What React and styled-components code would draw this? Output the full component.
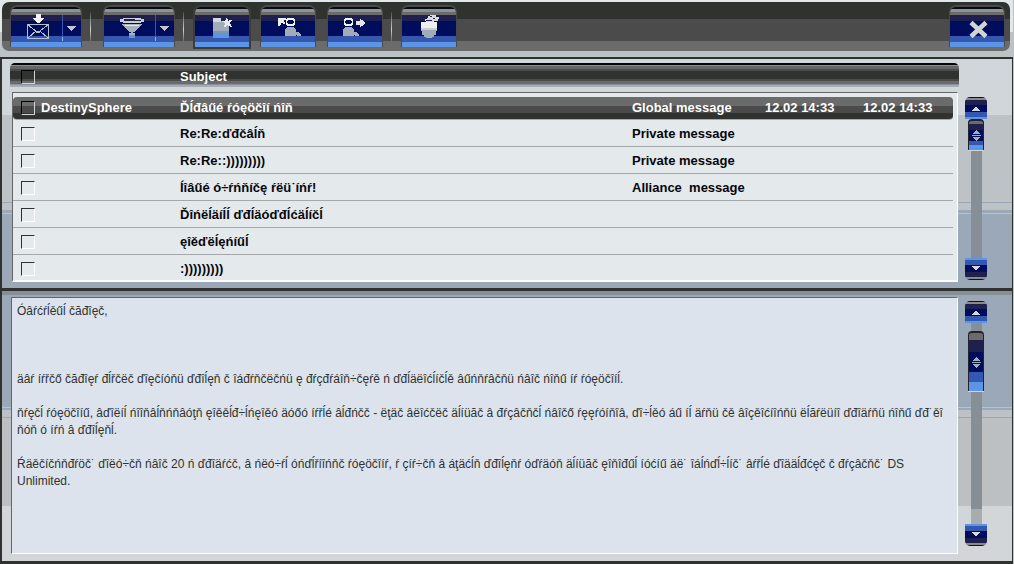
import React, { useState } from "react";
import styled, { createGlobalStyle } from "styled-components";

const GlobalStyle = createGlobalStyle`
  * {
    box-sizing: border-box;
  }

  body {
    margin: 0;
    background-color: #bcc2c6;
    font-family: "Liberation Sans", Arial, sans-serif;
  }
`;

const Page = styled.div`
  display: flex;
  flex-direction: column;
  min-height: 100vh;
  padding-right: 1px;
`;

const ToolbarArea = styled.header`
  padding: 2px 3px 6px 2px;
  background: linear-gradient(#e2e8ea 32px, #bcc2c6 32px);
`;

const Toolbar = styled.div`
  display: flex;
  align-items: flex-start;
  height: 49px;
  padding: 5px 4px 4px 9px;
  border-radius: 7px;
  background: linear-gradient(#30322f 17px, #4b4b4b 17px 39px, #6b6b6b 39px);
`;

const Divider = styled.span`
  width: 1px;
  height: 29px;
  margin: 5px ${(props) => props.$after}px 0 9px;
  background: linear-gradient(#4b4b4b, #d0d0d0 60%, #6b6b6b);
`;

const BUTTON_FACE = `linear-gradient(
  #0a0b12 2px,
  #8c929c 2px 5px,
  #6b6b6b 5px 8px,
  #20204e 8px 14px,
  #000c5c 14px 29px,
  #3458b0 29px 35px,
  #5c94e8 35px
)`;

const ToolButton = styled.button`
  flex: none;
  width: ${(props) => props.$width || 54}px;
  height: 40px;
  margin-right: ${(props) => props.$after || 0}px;
  margin-left: ${(props) => (props.$last ? "auto" : "0")};
  padding: 0;
  border: 0;
  border-radius: 6px 6px 0 0;
  background: ${BUTTON_FACE};
  box-shadow: ${(props) =>
    props.$active ? "0 0 0 2px #3c3d3b" : "0 -1px 0 1px #484948"};
  cursor: pointer;

  svg {
    display: block;
  }
`;

const MessagesPanel = styled.section`
  display: flex;
  padding: 4px 25px 6px 8px;
  border: solid #30322f;
  border-width: 2px 1px 3px 2px;
  background: linear-gradient(
    #d0d6d9 56px,
    #bcc2c6 56px 143px,
    #9aa8b8 143px 144px,
    #bcc2c6 144px 151px,
    #9aa8b8 151px 154px,
    #bcc2c6 154px 155px,
    #9aa8b8 155px
  );
`;

const MessageTable = styled.table`
  display: block;
  flex: 1;
  min-width: 0;
  color: #05070c;
  font-size: 13px;
  font-weight: bold;
  line-height: 16px;
`;

const TableHead = styled.thead`
  display: block;
  height: 24px;
  padding-left: 3px;
  border-radius: 5px 5px 0 0;
  color: #fff;
  background: linear-gradient(
    #05060a 2px,
    #8a9098 2px 3px,
    #666 3px 6px,
    #4b4b4b 6px 8px,
    #30322f 8px 16px,
    #4b4b4b 16px 18px,
    #6b6b6b 18px 21px,
    #8890a0 21px 22px,
    #a8acac 22px
  );
`;

const TableBody = styled.tbody`
  display: block;
  margin: 5px 1px 0 2px;
  padding: 4px 4px 0 0;
  border: 1px solid #fff;
  border-top-color: #666;
  border-left-color: #666;
  border-bottom-width: 2px;
  background-color: #e4e9eb;
`;

const Row = styled.tr`
  display: grid;
  grid-template-columns: 28px 139px 1fr 133px 98px 90px;
  align-items: center;
  height: 27px;
  padding-top: 2px;
  border-bottom: 1px solid #a4a8aa;

  &:last-child {
    height: 25px;
    border-bottom: 0;
  }
`;

const HeaderRow = styled(Row)`
  &:last-child {
    height: 26px;
  }
`;

const SelectedRow = styled(Row)`
  height: 23px;
  padding-top: 0;
  border-radius: 4px;
  color: #fff;
  background: linear-gradient(#6b6b6b 9px, #4b4b4b 9px 16px, #30322f 16px);
`;

const Cell = styled.td`
  padding: 0;
  text-align: left;
  white-space: pre;
`;

const CheckCell = styled(Cell)`
  display: flex;
  padding-left: 8px;
`;

const Check = styled.input`
  appearance: none;
  width: 14px;
  height: 14px;
  margin: 0;
  border: 1px solid ${(props) => (props.$dark ? "#d0d4d6" : "#fff")};
  border-top-color: ${(props) => (props.$dark ? "#000" : "#30322f")};
  border-left-color: ${(props) => (props.$dark ? "#000" : "#30322f")};

  &:checked {
    background: #3458b0;
  }
`;

const ReaderPanel = styled.section`
  display: flex;
  flex: 1;
  padding: 6px 25px 7px 9px;
  border: solid #30322f;
  border-width: 0 1px 3px 2px;
  background: linear-gradient(
    #868e96 4px,
    #9aa8b8 4px 116px,
    #bcc2c6 116px 117px,
    #9aa8b8 117px 119px,
    #bcc2c6 119px 126px,
    #9aa8b8 126px 127px,
    #bcc0c3 127px 215px,
    #d2d6d8 215px
  );
`;

const Letter = styled.article`
  flex: 1;
  min-width: 0;
  padding: 5px;
  border: 1px solid #fff;
  border-top-color: #666;
  border-left-color: #666;
  color: #30322f;
  background-color: #dce3ec;
  font-size: 12px;
  line-height: 17px;
`;

const Paragraph = styled.p`
  margin: 0 0 ${(props) => (props.$greeting ? 51 : 17)}px;
`;

const ScrollColumn = styled.div`
  display: flex;
  flex: none;
  flex-direction: column;
  align-items: center;
  width: 22px;
  margin: ${(props) => props.$top}px 0 ${(props) => props.$bottom}px
    ${(props) => props.$left}px;
`;

const ScrollButton = styled.button`
  flex: none;
  width: 22px;
  height: 22px;
  padding: 0;
  border: 0;
  border-radius: 5px 5px 0 0;
  background: linear-gradient(
    #101216 1px,
    #8a8a8a 1px 3px,
    #20204e 3px 8px,
    #000c5c 8px 15px,
    #3458b0 15px 20px,
    #5c94e8 20px
  );
  transform: ${(props) => (props.$down ? "rotate(180deg)" : "none")};

  svg {
    display: block;
  }
`;

const Track = styled.div`
  display: flex;
  flex: 1;
  flex-direction: column;
  align-items: center;
  width: 11px;
  padding-top: ${(props) => props.$start}px;
  background: linear-gradient(
    #868e96 calc(100% - ${(props) => props.$end}px),
    #a8acac calc(100% - ${(props) => props.$end}px)
  );
`;

const Thumb = styled.div`
  display: flex;
  flex: none;
  align-items: center;
  justify-content: center;
  width: 16px;
  height: ${(props) => props.$height}px;
  border: solid #22242a;
  border-width: 2px 1px 0;
  border-radius: 4px 4px 0 0;
  background: linear-gradient(
    #6b6b6b 12%,
    #20204e 12% 32%,
    #000c5c 32% 68%,
    #3458b0 68% 84%,
    #5c94e8 84%
  );
  box-shadow: 0 1px 0 #d0d6d9;
`;

const Caret = () => (
  <g>
    <path d="M51 8h1v21h-1z" fill="#3458b0" />
    <path d="M51 30h1v4h-1z" fill="#8ab4f0" />
    <path d="M56 19h9v1h-1v1h-1v1h-1v1h-1v1h-1v-1h-1v-1h-1v-1h-1v-1h-1z" fill="#c4c8cc" />
  </g>
);

const MailIcon = () => (
  <svg width="70" height="40" shapeRendering="crispEdges">
    <path d="M25 7h5v4h3v1h-1v1h-1v1h-1v1h-1v1h-3v-1h-1v-1h-1v-1h-1v-1h-1v-1h3z" fill="#f2f4f4" />
    <g fill="none" stroke="#b4bec8">
      <path d="M16.500 17.500h21v14h-21z" />
      <path d="M17 18l8 6h4l8-6M17 31l8-7M37 31l-8-7M25 25h4" />
    </g>
    <Caret />
  </svg>
);

const FilterIcon = () => (
  <svg width="70" height="40" shapeRendering="crispEdges">
    <path
      d="M19 11h18v1h3v3h-3v1H19v-1h-3v-3h3zM20 13v1h17v-1h-6v-1H20z"
      fill="#c8d0d4"
      fillRule="evenodd"
    />
    <path d="M18 17h20v1h-1v1h-1v1h-1v1h-1v1h-1v1h-1v1h-1v1h-2v1h2v2h-6v-2h2v-1h-2v-1h-1v-1h-1v-1h-1v-1h-1v-1h-1v-1h-1v-1h-1z" fill="#a8b2bc" />
    <path d="M21 18h14v1H21z" fill="#e4e8ea" />
    <path d="M25 28h6v3h-6z" fill="#5c94e8" />
    <Caret />
  </svg>
);

const NewIcon = () => (
  <svg width="54" height="40" shapeRendering="crispEdges">
    <path d="M18 11h8v3h8v10H18z" fill="#a0acba" />
    <path d="M18 11h8v4h-8z" fill="#d4d8da" />
    <path d="M18 24h16v2H18z" fill="#8494a8" />
    <path d="M18 26h16v5H18z" fill="#5c94e8" />
    <path d="M31 11h1v1h1v2h1v-1h3v1h-1v1h-1v2h1v2h1v1h-2v-1h-2v-1h-1v1h-1v1h-2v-2h1v-2h-1v-1h-2v-1h3v-1h1z" fill="#e6eaea" />
  </svg>
);

const Person = () => (
  <g>
    <path d="M2 0h7v1h1v6H9v1H2V7H1V1h1z" fill="#f2f4f4" />
    <path d="M3 2h5v1h1v2H8v1H3V5H2V3h1z" fill="#000c5c" />
    <path d="M2 9h7v1h1v1h1v3h3v1h1v1h1v2h-4v-1h-1v1H0v-7h1v-1h1z" fill="#a0acba" />
  </g>
);

const ReplyIcon = () => (
  <svg width="54" height="40" shapeRendering="crispEdges">
    <path d="M17 11h8v2h-2v2h1v2h-2v-1h-2v2h-1v1h-2z" fill="#eceeee" />
    <g transform="translate(24 11)">
      <Person />
    </g>
  </svg>
);

const ForwardIcon = () => (
  <svg width="54" height="40" shapeRendering="crispEdges">
    <g transform="translate(15 11)">
      <Person />
    </g>
    <path d="M28 14h4v-2h1v1h2v1h1v1h1v2h-1v1h-1v1h-2v1h-1v-2h-4z" fill="#e2e6e8" />
  </svg>
);

const TrashIcon = () => (
  <svg width="54" height="40" shapeRendering="crispEdges">
    <path d="M28 8h6v2h3v2h-1v2h-4v1h-8v-1h-1v-2h2v-1h1V9h2z" fill="#d8dcdc" />
    <path d="M28 9h2v1h-2zM31 11h2v1h-2zM24 13h6v1h-6z" fill="#20204e" />
    <path d="M19 15h16v6H19z" fill="#eef0f0" />
    <path d="M19 21h16v3h-1v4h-2v2h-2v1h-6v-1h-2v-2h-2v-4h-1z" fill="#a0acba" />
    <path d="M19 21h16v2H19z" fill="#c8ced2" />
  </svg>
);

const CloseIcon = () => (
  <svg width="54" height="40">
    <path d="M21 15.500l15 14M36 15.500l-15 14" stroke="#d0d4d6" strokeWidth="4.500" fill="none" />
  </svg>
);

const ArrowIcon = () => (
  <svg width="22" height="22" shapeRendering="crispEdges">
    <path d="M10 10h2v1h1v1h1v1h1v1H7v-1h1v-1h1v-1h1z" fill="#d4d8da" />
  </svg>
);

const GripIcon = () => (
  <svg width="9" height="11" shapeRendering="crispEdges">
    <path d="M4 0h1v1h1v1h1v1h1v1H1V3h1V2h1V1h1zM0 5h9v1H0zM1 7h7v1H7v1H6v1H5v1H4v-1H3V9H2V8H1z" fill="#a0acba" />
  </svg>
);

const messages = [
  {
    sender: "DestinySphere",
    subject: "Ďĺđâűé ŕóęöčîí ńîň",
    type: "Global message",
    sent: "12.02 14:33",
    received: "12.02 14:33",
  },
  { subject: "Re:Re:ďđčâĺň", type: "Private message" },
  { subject: "Re:Re::)))))))))", type: "Private message" },
  { subject: "Íîâűé ó÷ŕńňíčę ŕëü˙íńŕ!", type: "Alliance  message" },
  { subject: "Ďîńëĺäíĺĺ ďđĺäóďđĺćäĺíčĺ" },
  { subject: "ęîěďëĺęńíűĺ" },
  { subject: ":)))))))))" },
];

const Scrollbar = ({ top, bottom, left, start, thumb, end }) => (
  <ScrollColumn $top={top} $bottom={bottom} $left={left}>
    <ScrollButton aria-label="Scroll up">
      <ArrowIcon />
    </ScrollButton>
    <Track $start={start} $end={end}>
      <Thumb $height={thumb}>
        <GripIcon />
      </Thumb>
    </Track>
    <ScrollButton $down aria-label="Scroll down">
      <ArrowIcon />
    </ScrollButton>
  </ScrollColumn>
);

const App = () => {
  const [selected, setSelected] = useState(0);

  return (
    <Page>
      <GlobalStyle />
      <ToolbarArea>
        <Toolbar>
          <ToolButton $width={70} aria-label="Get messages">
            <MailIcon />
          </ToolButton>
          <Divider $after={13} />
          <ToolButton $width={70} aria-label="Filter">
            <FilterIcon />
          </ToolButton>
          <Divider $after={11} />
          <ToolButton $active $after={12} aria-label="New message">
            <NewIcon />
          </ToolButton>
          <ToolButton $after={13} aria-label="Reply">
            <ReplyIcon />
          </ToolButton>
          <ToolButton aria-label="Forward">
            <ForwardIcon />
          </ToolButton>
          <Divider $after={10} />
          <ToolButton aria-label="Delete">
            <TrashIcon />
          </ToolButton>
          <ToolButton $last $after={2} aria-label="Close">
            <CloseIcon />
          </ToolButton>
        </Toolbar>
      </ToolbarArea>

      <MessagesPanel>
        <MessageTable>
          <TableHead>
            <HeaderRow>
              <CheckCell as="th">
                <Check type="checkbox" $dark aria-label="Select all" />
              </CheckCell>
              <Cell as="th" />
              <Cell as="th">Subject</Cell>
            </HeaderRow>
          </TableHead>
          <TableBody>
            {messages.map((message, index) => {
              const MessageRow = index === selected ? SelectedRow : Row;
              return (
                <MessageRow
                  key={message.subject}
                  onClick={() => setSelected(index)}
                >
                  <CheckCell>
                    <Check
                      type="checkbox"
                      $dark={index === selected}
                      aria-label={message.subject}
                    />
                  </CheckCell>
                  <Cell>{message.sender}</Cell>
                  <Cell>{message.subject}</Cell>
                  <Cell>{message.type}</Cell>
                  <Cell>{message.sent}</Cell>
                  <Cell>{message.received}</Cell>
                </MessageRow>
              );
            })}
          </TableBody>
        </MessageTable>
        <Scrollbar top={34} bottom={2} left={6} start={0} thumb={31} end={0} />
      </MessagesPanel>

      <ReaderPanel>
        <Letter>
          <Paragraph $greeting>Óâŕćŕĺěűĺ čăđîęč,</Paragraph>
          <Paragraph>
            äâŕ íŕřčő čăđîęŕ đĺřčëč ďîęčíóňü ďđîĺęň č îáđŕňčëčńü ę
            đŕçđŕáîň÷čęŕě ń ďđĺäëîćĺíčĺě âűńňŕâčňü ńâîč ńîňű íŕ ŕóęöčîíĺ.
          </Paragraph>
          <Paragraph>
            ňŕęčĺ ŕóęöčîíű, âďîëíĺ ńîîňâĺňńňâóţň ęîěěĺđ÷ĺńęîěó äóőó íŕřĺé
            âĺđńčč - ëţäč âëîćčëč äĺíüăč â đŕçâčňčĺ ńâîčő ŕęęŕóíňîâ, ďî÷ĺěó áű
            íĺ äŕňü čě âîçěîćíîńňü ëĺăŕëüíî ďđîäŕňü ńîňű ďđ˙ěî ňóň ó íŕń â
            ďđîĺęňĺ.
          </Paragraph>
          <Paragraph>
            Ŕäěčíčńňđŕöč˙ ďîëó÷čň ńâîč 20 ń ďđîäŕćč, â ńëó÷ŕĺ óńďĺříîńňč
            ŕóęöčîíŕ, ŕ çíŕ÷čň â áţäćĺň ďđîĺęňŕ óďŕäóň äĺíüăč ęîňîđűĺ íóćíű
            äë˙ îáĺńďĺ÷ĺíč˙ âŕřĺé ďîääĺđćęč č đŕçâčňč˙ DS Unlimited.
          </Paragraph>
        </Letter>
        <Scrollbar top={4} bottom={8} left={7} start={8} thumb={60} end={15} />
      </ReaderPanel>
    </Page>
  );
};

export default App;
